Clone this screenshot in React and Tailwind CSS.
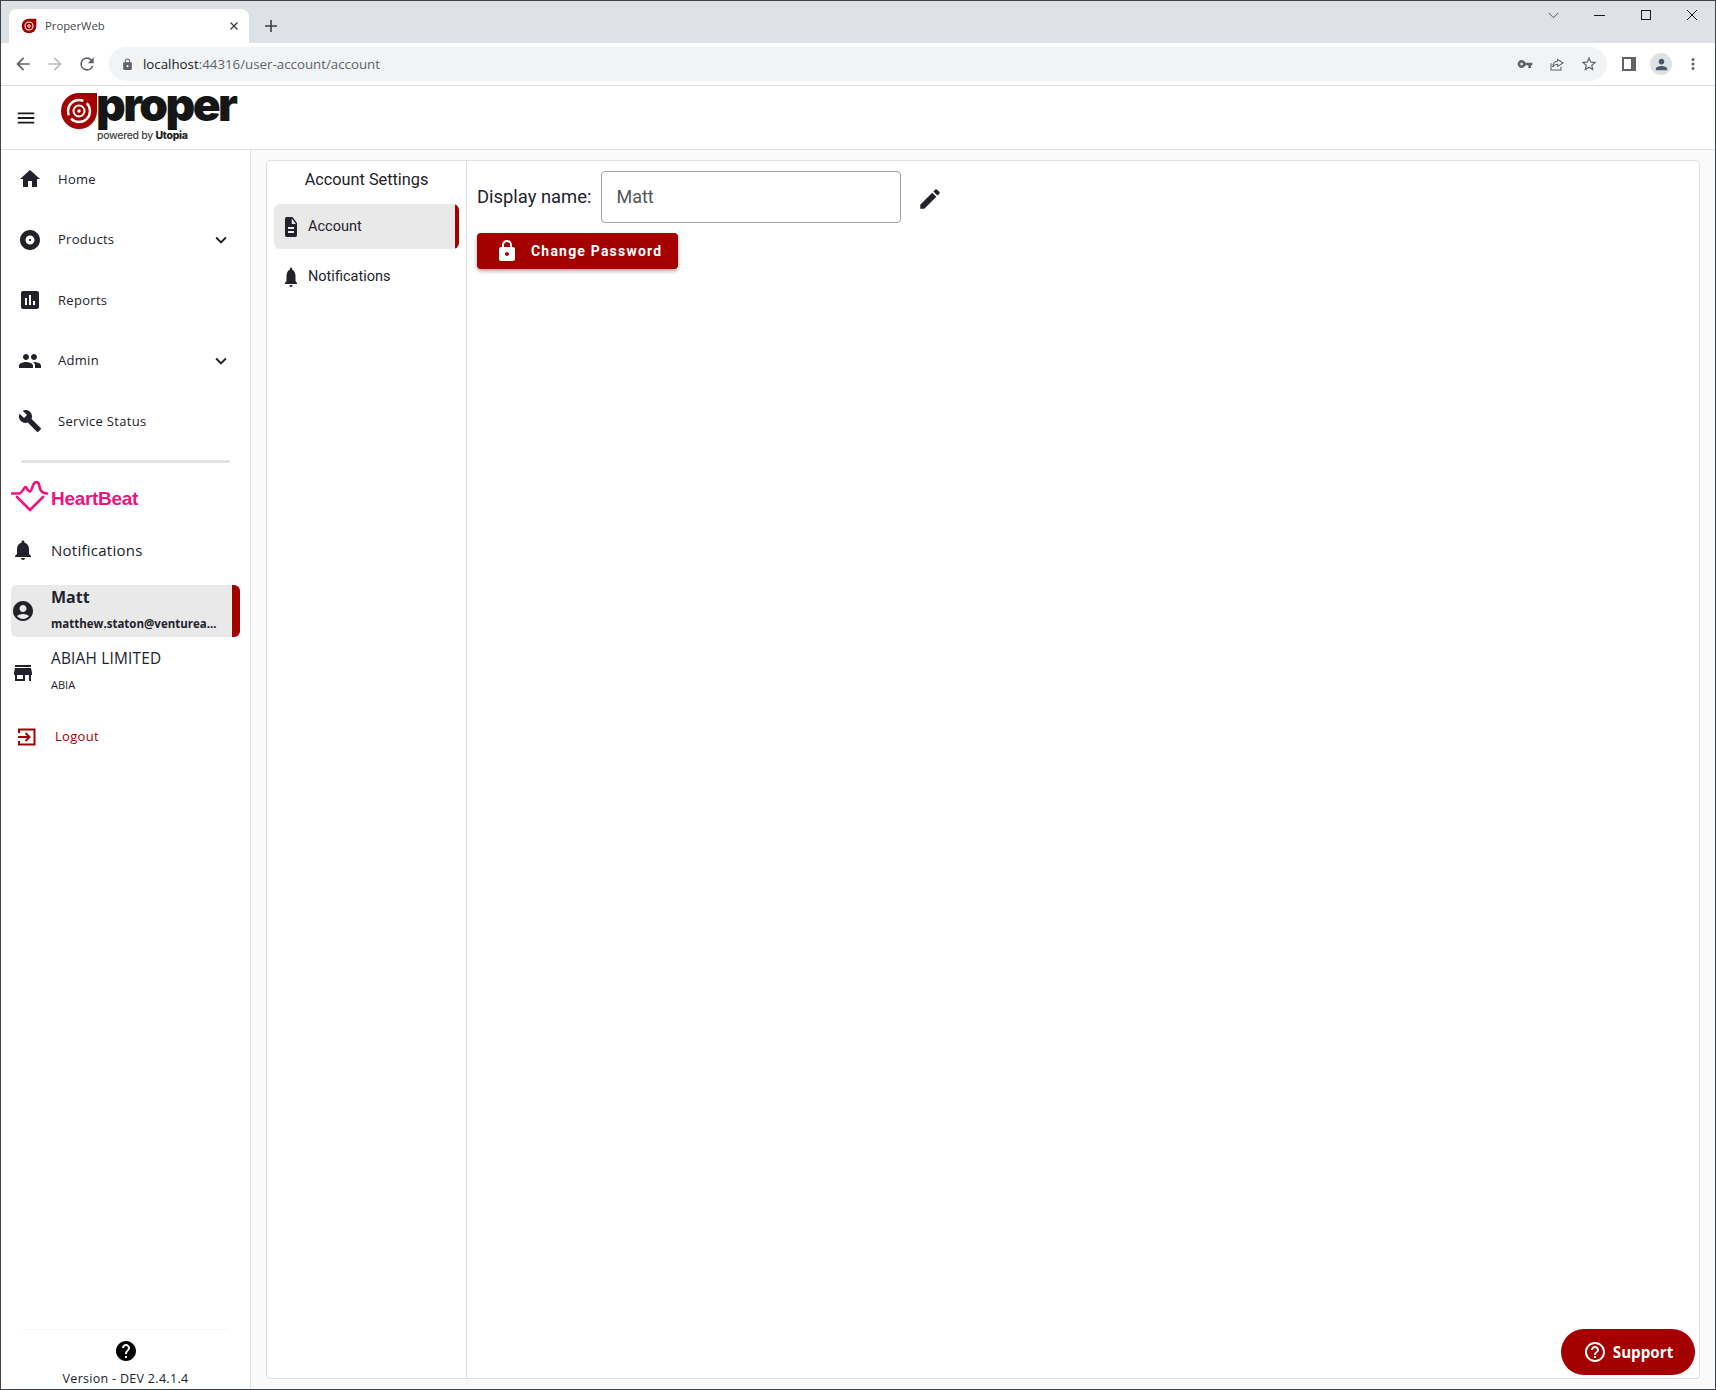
import React from "react";

const PATHS = {
  home: "M10 20v-6h4v6h5v-8h3L12 3 2 12h3v8z",
  album: "M12 2C6.48 2 2 6.48 2 12s4.48 10 10 10 10-4.48 10-10S17.52 2 12 2zm0 14.5c-2.49 0-4.5-2.01-4.5-4.5S9.51 7.5 12 7.5s4.5 2.01 4.5 4.5-2.01 4.5-4.5 4.5zm0-5.5c-.55 0-1 .45-1 1s.45 1 1 1 1-.45 1-1-.45-1-1-1z",
  assessment: "M19 3H5c-1.1 0-2 .9-2 2v14c0 1.1.9 2 2 2h14c1.1 0 2-.9 2-2V5c0-1.1-.9-2-2-2zM9 17H7v-7h2v7zm4 0h-2V7h2v10zm4 0h-2v-4h2v4z",
  people: "M16 11c1.66 0 2.99-1.34 2.99-3S17.66 5 16 5c-1.66 0-3 1.34-3 3s1.34 3 3 3zm-8 0c1.66 0 2.99-1.34 2.99-3S9.66 5 8 5C6.34 5 5 6.34 5 8s1.34 3 3 3zm0 2c-2.33 0-7 1.17-7 3.5V19h14v-2.5c0-2.33-4.67-3.5-7-3.5zm8 0c-.29 0-.62.02-.97.05 1.16.84 1.97 1.97 1.97 3.45V19h6v-2.5c0-2.33-4.67-3.5-7-3.5z",
  build: "M22.7 19l-9.1-9.1c.9-2.3.4-5-1.5-6.9-2-2-5-2.4-7.4-1.3L9 6 6 9 1.6 4.7C.4 7.1.9 10.1 2.9 12.1c1.9 1.9 4.6 2.4 6.9 1.5l9.1 9.1c.4.4 1 .4 1.4 0l2.3-2.3c.5-.4.5-1.1.1-1.4z",
  bell: "M12 22c1.1 0 2-.9 2-2h-4c0 1.1.89 2 2 2zm6-6v-5c0-3.07-1.64-5.64-4.5-6.32V4c0-.83-.67-1.5-1.5-1.5s-1.5.67-1.5 1.5v.68C7.63 5.36 6 7.92 6 11v5l-2 2v1h16v-1l-2-2z",
  account: "M12 2C6.48 2 2 6.48 2 12s4.48 10 10 10 10-4.48 10-10S17.52 2 12 2zm0 4c1.93 0 3.5 1.57 3.5 3.5S13.93 13 12 13s-3.5-1.57-3.5-3.5S10.07 6 12 6zm0 14c-2.03 0-4.43-.82-6.14-2.88C7.55 15.8 9.68 15 12 15s4.45.8 6.14 2.12C16.43 19.18 14.03 20 12 20z",
  store: "M20 4H4v2h16V4zm1 10v-2l-1-5H4l-1 5v2h1v6h10v-6h4v6h2v-6h1zm-9 4H6v-4h6v4z",
  description: "M14 2H6c-1.1 0-1.99.9-1.99 2L4 20c0 1.1.89 2 1.99 2H18c1.1 0 2-.9 2-2V8l-6-6zm2 16H8v-2h8v2zm0-4H8v-2h8v2zm-3-5V3.5L18.5 9H13z",
  edit: "M3 17.25V21h3.75L17.81 9.94l-3.75-3.75L3 17.25zM20.71 7.04c.39-.39.39-1.02 0-1.41l-2.34-2.34c-.39-.39-1.02-.39-1.41 0l-1.83 1.83 3.75 3.75 1.83-1.83z",
  lock: "M18 8h-1V6c0-2.76-2.24-5-5-5S7 3.24 7 6v2H6c-1.1 0-2 .9-2 2v10c0 1.1.9 2 2 2h12c1.1 0 2-.9 2-2V10c0-1.1-.9-2-2-2zm-6 9c-1.1 0-2-.9-2-2s.9-2 2-2 2 .9 2 2-.9 2-2 2zm3.1-9H8.9V6c0-1.71 1.39-3.1 3.1-3.1 1.71 0 3.1 1.39 3.1 3.1v2z",
  help: "M12 2C6.48 2 2 6.48 2 12s4.48 10 10 10 10-4.48 10-10S17.52 2 12 2zm1 17h-2v-2h2v2zm2.07-7.75l-.9.92C13.45 12.9 13 13.5 13 15h-2v-.5c0-1.1.45-2.1 1.17-2.83l1.24-1.26c.37-.36.59-.86.59-1.41 0-1.1-.9-2-2-2s-2 .9-2 2H8c0-2.21 1.79-4 4-4s4 1.79 4 4c0 .88-.36 1.68-.93 2.25z",
  helpOutline: "M11 18h2v-2h-2v2zm1-16C6.48 2 2 6.48 2 12s4.48 10 10 10 10-4.48 10-10S17.52 2 12 2zm0 18c-4.41 0-8-3.59-8-8s3.59-8 8-8 8 3.59 8 8-3.59 8-8 8zm0-14c-2.21 0-4 1.79-4 4h2c0-1.1.9-2 2-2s2 .9 2 2c0 2-3 1.75-3 5h2c0-2.25 3-2.5 3-5 0-2.21-1.79-4-4-4z",
  chevron: "M7.41 8.59 12 13.17l4.59-4.58L18 10l-6 6-6-6z",
  menu: "M3 18h18v-2H3v2zm0-5h18v-2H3v2zm0-7v2h18V6H3z",
  back: "M20 11H7.83l5.59-5.59L12 4l-8 8 8 8 1.41-1.41L7.83 13H20v-2z",
  forward: "M4 11h12.17l-5.59-5.59L12 4l8 8-8 8-1.41-1.41L16.17 13H4v-2z",
  reload: "M17.65 6.35A7.96 7.96 0 0 0 12 4a8 8 0 1 0 7.73 10h-2.08A6 6 0 1 1 12 6c1.66 0 3.14.69 4.22 1.78L13 11h7V4l-2.35 2.35z",
  key: "M12.65 10A6 6 0 1 0 12.65 14H17v4h4v-4h2v-4H12.65zM7 14a2 2 0 1 1 0-4 2 2 0 0 1 0 4z",
  star: "M22 9.24l-7.19-.62L12 2 9.19 8.63 2 9.24l5.46 4.73L5.82 21 12 17.27 18.18 21l-1.63-7.03L22 9.24zM12 15.4l-3.76 2.27 1-4.28-3.32-2.88 4.38-.38L12 6.1l1.71 4.04 4.38.38-3.32 2.88 1 4.28L12 15.4z",
  person: "M12 12c2.21 0 4-1.79 4-4s-1.79-4-4-4-4 1.79-4 4 1.79 4 4 4zm0 2c-2.67 0-8 1.34-8 4v2h16v-2c0-2.66-5.33-4-8-4z",
  dots: "M12 8a2 2 0 1 0 0-4 2 2 0 0 0 0 4zm0 2a2 2 0 1 0 0 4 2 2 0 0 0 0-4zm0 6a2 2 0 1 0 0 4 2 2 0 0 0 0-4z",
};

function Icon({ name, className, stretch }) {
  return (
    <svg viewBox="0 0 24 24" fill="currentColor" className={className} preserveAspectRatio={stretch ? "none" : undefined}>
      <path d={PATHS[name]} />
    </svg>
  );
}

const NAV = [
  { label: "Home", icon: "home" },
  { label: "Products", icon: "album", caret: true },
  { label: "Reports", icon: "assessment" },
  { label: "Admin", icon: "people", caret: true },
  { label: "Service Status", icon: "build" },
];

function BrowserChrome() {
  return (
    <div className="shrink-0 font-['Open_Sans',sans-serif]">
      <div className="flex h-[42px] items-end bg-[#dee1e6] pl-2">
        <div className="flex h-[34px] w-[240px] items-center rounded-t-[8px] bg-white pl-[12px] pr-[10px]">
          <svg viewBox="0 0 24 24" className="h-4 w-4 shrink-0">
            <path d="M12 1h11v11a11 11 0 1 1-11-11z" fill="#a50000" />
            <circle cx="12" cy="12" r="6" fill="none" stroke="#fff" strokeWidth="1.6" />
            <circle cx="12" cy="12" r="2" fill="none" stroke="#fff" strokeWidth="1.4" />
          </svg>
          <span className="ml-[8px] flex-1 text-[11.3px] text-[#45494d]">ProperWeb</span>
          <svg viewBox="0 0 10 10" className="h-[10px] w-[10px] text-[#3c4043]">
            <path d="M1.5 1.5l7 7M8.5 1.5l-7 7" stroke="currentColor" strokeWidth="1.4" />
          </svg>
        </div>
        <svg viewBox="0 0 12 12" className="mb-[11px] ml-[16px] h-3 w-3 text-[#3c4043]">
          <path d="M6 0v12M0 6h12" stroke="currentColor" strokeWidth="1.6" />
        </svg>
        <div className="flex-1" />
        <div className="mb-[23px] flex items-center pr-[18px] text-[#1a1a1a]">
          <svg viewBox="0 0 12 8" className="mr-[35px] h-[7px] w-[11px]">
            <path d="M.5 1l5.5 5.5L11.5 1" fill="none" stroke="#3c4043" strokeWidth="1" />
          </svg>
          <div className="mr-[36px] h-px w-[11px] bg-[#1a1a1a]" />
          <div className="mr-[36px] h-[10px] w-[10px] border border-[#1a1a1a]" />
          <svg viewBox="0 0 10 10" className="h-[10px] w-[10px]">
            <path d="M0 0l10 10M10 0L0 10" stroke="#1a1a1a" strokeWidth="1" />
          </svg>
        </div>
      </div>
      <div className="flex h-[43px] items-center border-b border-[#dadce0] bg-white pl-[12px] pr-[13px]">
        <Icon name="back" className="h-[20px] w-[20px] text-[#5f6368]" />
        <Icon name="forward" className="ml-[12px] h-[20px] w-[20px] text-[#babcbe]" />
        <Icon name="reload" className="ml-[12px] h-[20px] w-[20px] text-[#5f6368]" />
        <div className="ml-[12px] flex h-[34px] flex-1 items-center rounded-full bg-[#f1f3f4] pl-[12px] pr-[9px]">
          <Icon name="lock" className="h-[13px] w-[13px] text-[#5f6368]" />
          <div className="ml-[9px] flex-1 pt-[1px] text-[13.3px] text-[#5f6368]">
            <span className="text-[#202124]">localhost</span>:44316/user-account/account
          </div>
          <Icon name="key" className="mr-[16px] h-[16px] w-[16px] text-[#5f6368]" />
          <svg viewBox="0 0 24 24" className="mr-[15px] h-[16px] w-[16px] text-[#5f6368]" fill="none" stroke="currentColor" strokeWidth="1.6">
            <path d="M3 11v10h15v-5M13 5l8 5.5-8 5V12.5c-4 0-6 1.5-7.5 4 .5-5 3-8.5 7.500-9V5z" />
          </svg>
          <Icon name="star" className="h-[18px] w-[18px] text-[#5f6368]" />
        </div>
        <div className="ml-[15px] flex h-[14px] w-[14px] bg-[#5f6368] p-[2px]">
          <div className="h-full w-[7px] bg-white" />
        </div>
        <div className="ml-[14px] flex h-[22px] w-[22px] items-center justify-center rounded-full bg-[#dee1e6]">
          <Icon name="person" className="h-[17px] w-[17px] text-[#4d5767]" />
        </div>
        <Icon name="dots" className="ml-[12px] h-[18px] w-[18px] text-[#5f6368]" />
      </div>
    </div>
  );
}

function AppHeader() {
  return (
    <div className="flex h-[64px] shrink-0 items-center border-b border-[#e0e0e0] bg-white pl-[14px]">
      <Icon name="menu" className="mt-[1px] h-[22px] w-[22px] text-[#1a1a1a]" />
      <div className="ml-[24px] flex h-full items-start">
        <svg viewBox="0 0 36 36" className="mt-[7px] h-[36px] w-[36px] shrink-0">
          <path d="M18 0h18v18a18 18 0 1 1-18-18z" fill="#a50000" />
          <circle cx="18" cy="18" r="11" fill="none" stroke="#fff" strokeWidth="2.4" strokeDasharray="26 4" />
          <circle cx="18" cy="18" r="5.500" fill="none" stroke="#fff" strokeWidth="2" />
          <circle cx="18" cy="18" r="1.800" fill="#fff" />
        </svg>
        <div className="-ml-[1px] flex flex-col">
          <div className="-mt-[4px] h-[44px] font-['Inter',sans-serif] text-[46px] leading-[44px] font-black tracking-[-2.5px] text-[#161616]">proper</div>
          <div className="mt-[3px] pl-[1px] font-['Inter',sans-serif] text-[10.5px] leading-[14px] font-medium tracking-[-0.3px] text-[#444]">
            powered by <span className="font-extrabold text-[#222]">Utopia</span>
          </div>
        </div>
      </div>
    </div>
  );
}

function Sidebar() {
  return (
    <div className="flex w-[250px] shrink-0 flex-col border-r border-[#e0e0e0] bg-white font-['Open_Sans',sans-serif] text-[#22222a]">
      <div className="-mt-[1px]">
        {NAV.map((item) => (
          <div key={item.label} className="flex h-[60.5px] items-center pl-[17px] pr-[18px]">
            <Icon name={item.icon} className="h-[24px] w-[24px] shrink-0" />
            <span className="ml-[16px] flex-1 text-[13px] tracking-[0.3px]">{item.label}</span>
            {item.caret && <Icon name="chevron" className="h-[22px] w-[22px]" />}
          </div>
        ))}
      </div>
      <div className="mx-[20px] mt-[8px] h-[3px] rounded-full bg-[#e2e2e2]" />
      <div className="mt-[18px] flex items-center pl-[10px]">
        <svg viewBox="0 0 38 32" className="h-[32px] w-[38px] shrink-0" fill="none" stroke="#f0137f" strokeWidth="2.600" strokeLinejoin="round" strokeLinecap="round">
          <path d="M1 12.500h7c2 0 3-2 5-5 1-2 2-2 3 0 1 2 2 3 3 3s2-3 3-6c1-3 3-4 5-3 2 2 1 6 3 8 1 2 3 3 6 3" />
          <path d="M6 16l13 13 13-13" />
        </svg>
        <span className="ml-[2px] mt-[4px] font-['Liberation_Sans',sans-serif] text-[19px] font-bold tracking-[-0.3px] text-[#f0137f]">HeartBeat</span>
      </div>
      <div className="mt-[25px] flex h-[24px] items-center pl-[10px]">
        <Icon name="bell" className="h-[24px] w-[24px] shrink-0" />
        <span className="ml-[16px] text-[15px] tracking-[0.25px]">Notifications</span>
      </div>
      <div className="relative mx-[10px] mt-[23px] flex h-[52px] w-[229px] items-center overflow-hidden rounded-[6px] bg-[#e9e9e9]">
        <Icon name="account" className="h-[24px] w-[24px] shrink-0" />
        <div className="ml-[16px] -mt-[3px] flex flex-col">
          <span className="text-[16px] leading-[22px] font-bold">Matt</span>
          <span className="mt-[6px] text-[11.5px] leading-[20px] font-bold text-[#22222a]">matthew.staton@venturea...</span>
        </div>
        <div className="absolute top-0 right-0 h-full w-[8px] bg-[#a50000]" />
      </div>
      <div className="mt-[10px] flex items-center pl-[10px]">
        <Icon name="store" className="h-[24px] w-[24px] shrink-0" />
        <div className="ml-[16px] flex flex-col">
          <span className="text-[15.4px] leading-[24px] tracking-[0.2px]">ABIAH LIMITED</span>
          <span className="text-[11px] leading-[28px]">ABIA</span>
        </div>
      </div>
      <div className="mt-[28px] flex items-center pl-[16px] text-[#a50000]">
        <svg viewBox="0 0 20 20" className="h-[20px] w-[20px]" fill="none" stroke="currentColor" strokeWidth="2">
          <path d="M2 6V2.500h15.500v15H2V14M1 10h11M8.500 6l4 4-4 4" />
        </svg>
        <span className="ml-[18px] text-[13px] tracking-[0.3px]">Logout</span>
      </div>
      <div className="flex-1" />
      <div className="mx-[21px] h-px bg-[#f5f5f5]" />
      <div className="flex justify-center pt-[9px]">
        <Icon name="help" className="h-[24px] w-[24px] text-black" />
      </div>
      <div className="pt-[6px] text-center text-[12.5px] leading-[20px] tracking-[0.3px]">Version - DEV 2.4.1.4</div>
    </div>
  );
}

function SettingsPanel() {
  return (
    <div className="flex w-[200px] shrink-0 flex-col border-r border-[#e0e0e0] font-['Roboto',sans-serif] text-[#22222a]">
      <div className="pt-[7px] text-center text-[16.3px] leading-[24px]">Account Settings</div>
      <div className="relative mx-[7px] mt-[12px] flex h-[45px] w-[185px] items-center overflow-hidden rounded-[6px] bg-[#e9e9e9] pl-[8px]">
        <Icon name="description" className="h-[24px] w-[18px] shrink-0" stretch />
        <span className="ml-[8px] pt-[1px] text-[14.5px]">Account</span>
        <div className="absolute top-0 right-0 h-full w-[4px] bg-[#a50000]" />
      </div>
      <div className="mx-[7px] mt-[6px] flex h-[44px] items-center pl-[8px]">
        <Icon name="bell" className="h-[24px] w-[18px] shrink-0" stretch />
        <span className="ml-[8px] text-[14.5px]">Notifications</span>
      </div>
    </div>
  );
}

function AccountForm() {
  return (
    <div className="flex-1 pt-[10px] pl-[10px] font-['Roboto',sans-serif] text-[#22222a]">
      <div className="flex items-center">
        <span className="text-[18.4px]">Display name:</span>
        <div className="ml-[10px] flex h-[52px] w-[300px] items-center rounded-[4px] border border-[#a0a0a0] bg-white pb-[1px] pl-[14px] text-[18px] text-[#555]">Matt</div>
        <Icon name="edit" className="mt-[4px] ml-[16px] h-[26px] w-[26px] text-[#22222a]" />
      </div>
      <button className="mt-[10px] flex h-[36px] w-[201px] items-center rounded-[4px] bg-[#a50000] pl-[18px] text-white shadow-[0_2px_4px_rgba(0,0,0,0.35)]">
        <Icon name="lock" className="h-[24px] w-[24px] shrink-0" />
        <span className="ml-[12px] text-[14px] font-bold tracking-[1.2px]">Change Password</span>
      </button>
    </div>
  );
}

export default function App() {
  return (
    <div className="relative flex h-[1390px] w-[1716px] flex-col overflow-hidden border border-[#3f4448] bg-[#fafafa]">
      <BrowserChrome />
      <AppHeader />
      <div className="flex min-h-0 flex-1">
        <Sidebar />
        <div className="min-w-0 flex-1 pt-[10px] pr-[15px] pb-[10px] pl-[15px]">
          <div className="flex h-full rounded-[4px] border border-[#e0e0e0] bg-white">
            <SettingsPanel />
            <AccountForm />
          </div>
        </div>
      </div>
      <button className="absolute right-[20px] bottom-[14px] flex h-[46px] w-[134px] items-center justify-center rounded-full bg-[#a50000] font-['Open_Sans',sans-serif] text-[15.2px] font-bold text-white">
        <Icon name="helpOutline" className="h-[24px] w-[24px]" />
        <span className="ml-[6px]">Support</span>
      </button>
    </div>
  );
}
